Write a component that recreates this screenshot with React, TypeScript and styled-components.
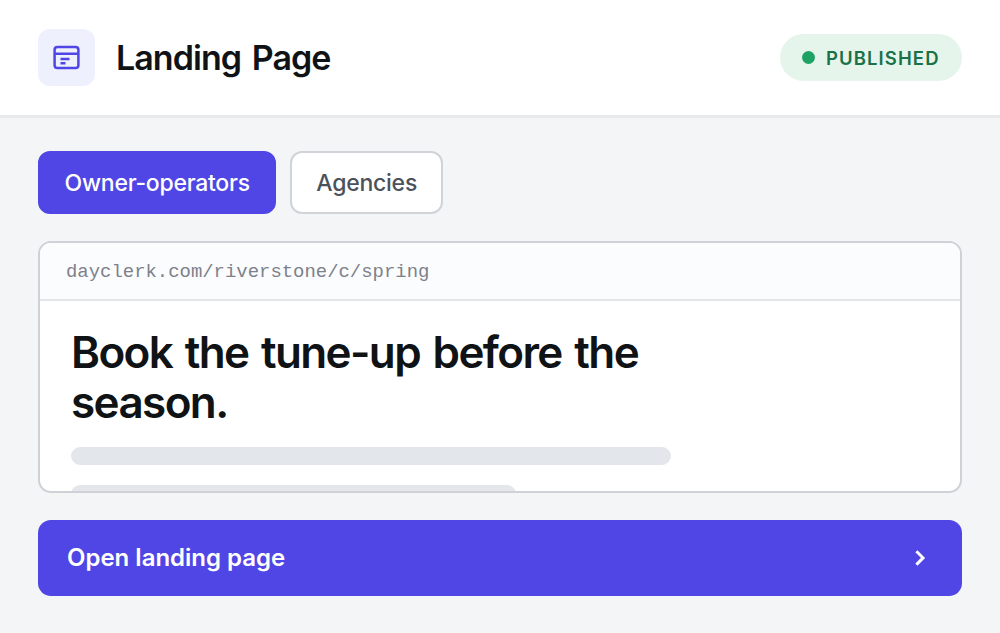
import styled, { createGlobalStyle } from "styled-components";

const GlobalStyle = createGlobalStyle`
  * {
    box-sizing: border-box;
  }
  body {
    margin: 0;
    background-color: #f3f5f7;
    font-family: Inter, "Liberation Sans", sans-serif;
    color: #101316;
  }
`;

const Container = styled.div`
  display: flex;
  flex-direction: column;
  height: 633px;
  overflow: hidden;
`;

const Header = styled.header`
  display: flex;
  align-items: center;
  flex-shrink: 0;
  height: 118px;
  padding: 0 38px;
  background-color: #ffffff;
  border-bottom: 3px solid #e7e9eb;
`;

const IconBox = styled.div`
  display: flex;
  align-items: center;
  justify-content: center;
  width: 57px;
  height: 57px;
  margin-right: 21px;
  border-radius: 12px;
  background-color: #eef0fe;
`;

const Title = styled.h1`
  margin: 0;
  font-size: 34px;
  font-weight: 600;
  letter-spacing: -0.95px;
  word-spacing: 3px;
  white-space: nowrap;
`;

const Status = styled.div`
  display: flex;
  align-items: center;
  gap: 11px;
  width: 182px;
  height: 47px;
  margin-left: auto;
  padding-left: 22px;
  border-radius: 24px;
  background-color: #e6f5ec;
  color: #1b7148;
  font-size: 18.5px;
  font-weight: 600;
  letter-spacing: 1.1px;
`;

const Dot = styled.span`
  width: 13px;
  height: 13px;
  border-radius: 50%;
  background-color: #1fa364;
`;

const Content = styled.main`
  display: flex;
  flex-direction: column;
  padding: 33px 38px 0;
`;

const Tabs = styled.div`
  display: flex;
  gap: 14px;
`;

const Tab = styled.button<{ $active?: boolean; $width: number }>`
  width: ${(props) => props.$width}px;
  height: 63px;
  padding: 0;
  border: 2px solid ${(props) => (props.$active ? "#4f46e5" : "#d0d3d7")};
  border-radius: 12px;
  background-color: ${(props) => (props.$active ? "#4f46e5" : "#ffffff")};
  color: ${(props) => (props.$active ? "#ffffff" : "#4b515b")};
  font-family: inherit;
  font-size: 23px;
  font-weight: 500;
  letter-spacing: -0.25px;
  white-space: nowrap;
`;

const Preview = styled.section`
  height: 252px;
  margin-top: 27px;
  overflow: hidden;
  border: 2px solid #ced1d5;
  border-radius: 13px;
  background-color: #ffffff;
`;

const Address = styled.div`
  display: flex;
  align-items: center;
  height: 58px;
  padding: 2px 26px 0;
  border-bottom: 2px solid #e3e6e9;
  background-color: #fbfcfe;
  color: #7e818a;
  font-family: "Liberation Mono", monospace;
  font-size: 18.93px;
`;

const PreviewBody = styled.div`
  padding: 26px 31px;
`;

const Headline = styled.h2`
  width: 600px;
  margin: 0;
  font-size: 44px;
  font-weight: 600;
  line-height: 50px;
  letter-spacing: -1.6px;
  word-spacing: 3px;
  white-space: nowrap;
`;

const Line = styled.div<{ $width: number }>`
  width: ${(props) => props.$width}px;
  height: 18px;
  margin-top: 20px;
  border-radius: 9px;
  background-color: #e3e7ec;
`;

const OpenButton = styled.button`
  display: flex;
  align-items: center;
  justify-content: space-between;
  height: 75.5px;
  margin-top: 27px;
  padding: 0 29px;
  border: 0;
  border-radius: 13px;
  background-color: #4f46e5;
  color: #ffffff;
  font-family: inherit;
  font-size: 24px;
  font-weight: 600;
`;

function App() {
  return (
    <Container>
      <GlobalStyle />
      <Header>
        <IconBox>
          <svg width="27" height="25" viewBox="0 0 27 25" fill="none" stroke="#4f46e5" strokeWidth="2.5">
            <rect x="1.6" y="1.9" width="23.8" height="21.2" rx="2.8" />
            <path d="M2 8.7h23M7.5 14h9M7.5 18.3h5" />
          </svg>
        </IconBox>
        <Title>
          <span>Landing Page</span>
        </Title>
        <Status>
          <Dot />
          <span>PUBLISHED</span>
        </Status>
      </Header>
      <Content>
        <Tabs>
          <Tab $active $width={238.4}>
            <span>Owner-operators</span>
          </Tab>
          <Tab $width={152.6}>
            <span>Agencies</span>
          </Tab>
        </Tabs>
        <Preview>
          <Address>
            <span>dayclerk.com/riverstone/c/spring</span>
          </Address>
          <PreviewBody>
            <Headline>
              Book the tune-up before the
              <br />
              season.
            </Headline>
            <Line $width={600} />
            <Line $width={445} />
          </PreviewBody>
        </Preview>
        <OpenButton>
          <span>Open landing page</span>
          <svg width="26" height="26" viewBox="0 0 26 26" fill="none" stroke="currentColor" strokeWidth="2.9">
            <path d="M9.4 6.2l6.7 6.7-6.7 6.7" />
          </svg>
        </OpenButton>
      </Content>
    </Container>
  );
}

export default App;
